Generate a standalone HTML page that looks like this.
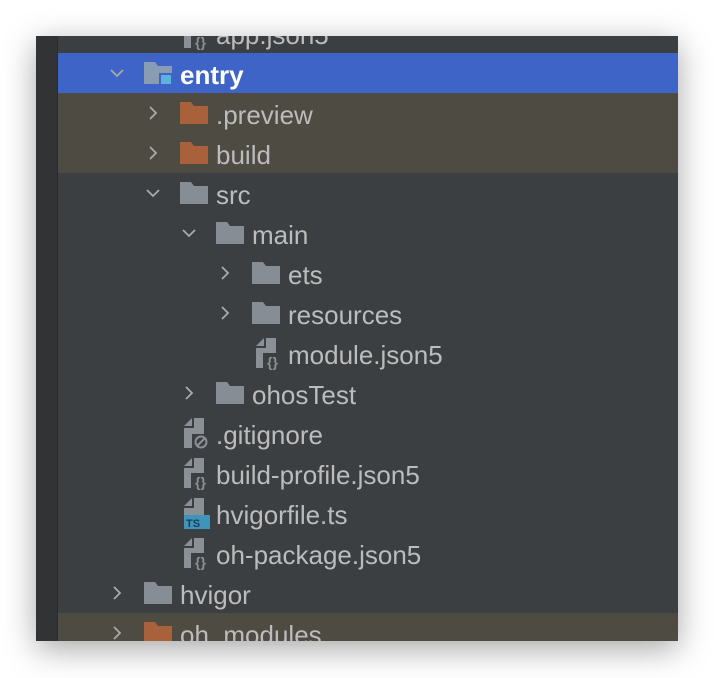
<!DOCTYPE html>
<html><head><style>
body{margin:0;width:714px;height:678px;background:#fff;position:relative;overflow:hidden;font-family:"Liberation Sans",Arial,sans-serif}
#win{position:absolute;left:36px;top:36px;width:642px;height:605px;background:#3c3f41;overflow:hidden;box-shadow:0 8px 30px rgba(0,0,0,.35)}
#gut{position:absolute;left:0;top:0;width:21px;height:605px;background:#313335;border-right:1px solid #2b2b2b}
.row{position:absolute;left:22px;right:0;height:40px}
.sel{background:#3d64c6}
.br{background:#4e4b43}
.t{position:absolute;top:7px;font-size:26px;color:#bcbcbc;line-height:30px;white-space:nowrap}
.chev{position:absolute;top:12px;width:16px;height:16px}
.f{position:absolute;top:9px;width:28px;height:22px}
.fi{position:absolute;top:5px;width:28px;height:32px}
</style></head><body>
<div id="win"><div id="gut"></div></div>
<div id="rows" style="position:absolute;left:36px;top:36px;width:642px;height:605px;overflow:hidden">
</div>
<script>
const R=document.getElementById('rows');
const gray='#878d95',org='#a8613a';
function chev(x,open){return `<svg class="chev" style="left:${x}px" viewBox="0 0 16 16"><path d="${open?'M2 5 L8 11 L14 5':'M5 2 L11 8 L5 14'}" stroke="#a9a9a9" stroke-width="1.8" fill="none"/></svg>`}
function fold(x,c){return `<svg class="f" style="left:${x}px" viewBox="0 0 28 22"><path d="M0 0H11L14 4H28V22H0Z" fill="${c}"/></svg>`}
function file(x,type){let o=`<svg class="fi" style="left:${x}px" viewBox="0 0 28 32"><path d="M0 8L8 0V8Z" fill="#8b9096"/><path d="M10 0H20V30H0V10H10Z" fill="#8b9096"/>`;
 if(type=='json')o+=`<rect x="7" y="15" width="20" height="17" fill="#3c3f41"/><text x="16.5" y="29" font-size="14" font-weight="bold" fill="#8b9096" text-anchor="middle" font-family="Liberation Sans">{}</text>`;
 if(type=='git')o+=`<rect x="8" y="16" width="18" height="16" fill="#3c3f41"/><circle cx="17" cy="24" r="5.5" stroke="#8b9096" stroke-width="2" fill="none"/><path d="M13 28L21 20" stroke="#8b9096" stroke-width="2"/>`;
 if(type=='ts')o+=`<rect x="-4" y="17" width="30" height="14" fill="#3d95bb"/><text x="9" y="29" font-size="11" font-weight="bold" fill="#1d3b55" text-anchor="middle" font-family="Liberation Sans">TS</text>`;
 return o+'</svg>'}
const rows=[
 [-23,'',null,'app.json5',144,'file','json'],
 [17,'sel',[73,1],'entry',108,'mod'],
 [57,'br',[109,0],'.preview',144,'org'],
 [97,'br',[109,0],'build',144,'org'],
 [137,'',[109,1],'src',144,'gray'],
 [177,'',[145,1],'main',180,'gray'],
 [217,'',[181,0],'ets',216,'gray'],
 [257,'',[181,0],'resources',216,'gray'],
 [297,'',null,'module.json5',216,'file','json'],
 [337,'',[145,0],'ohosTest',180,'gray'],
 [377,'',null,'.gitignore',144,'file','git'],
 [417,'',null,'build-profile.json5',144,'file','json'],
 [457,'',null,'hvigorfile.ts',144,'file','ts'],
 [497,'',null,'oh-package.json5',144,'file','json'],
 [537,'',[73,0],'hvigor',108,'gray'],
 [577,'br',[73,0],'oh_modules',108,'org']];
let h='';
for(const r of rows){const [y,cls,ch,txt,ix,kind,ft]=r;
 let s=`<div class="row ${cls}" style="top:${y}px">`;
 const off=-22;
 if(ch)s+=chev(ch[0]+off,ch[1]);
 if(kind=='file')s+=file(ix+off+4,ft);
 else if(kind=='mod')s+=`<svg class="f" style="left:${ix+off}px" viewBox="0 0 28 22"><path d="M0 0H11L14 4H28V22H0Z" fill="#8a9bb4"/><rect x="16" y="12" width="12" height="12" fill="#5eb1de" stroke="#3d64c6" stroke-width="2"/></svg>`;
 else s+=fold(ix+off,kind=='org'?org:gray);
 s+=`<div class="t" style="left:${ix+off+36}px;${kind=='mod'?'font-weight:bold;color:#fff;':''}">${txt}</div></div>`;
 h+=s;}
R.innerHTML=h;
</script>
</body></html>
